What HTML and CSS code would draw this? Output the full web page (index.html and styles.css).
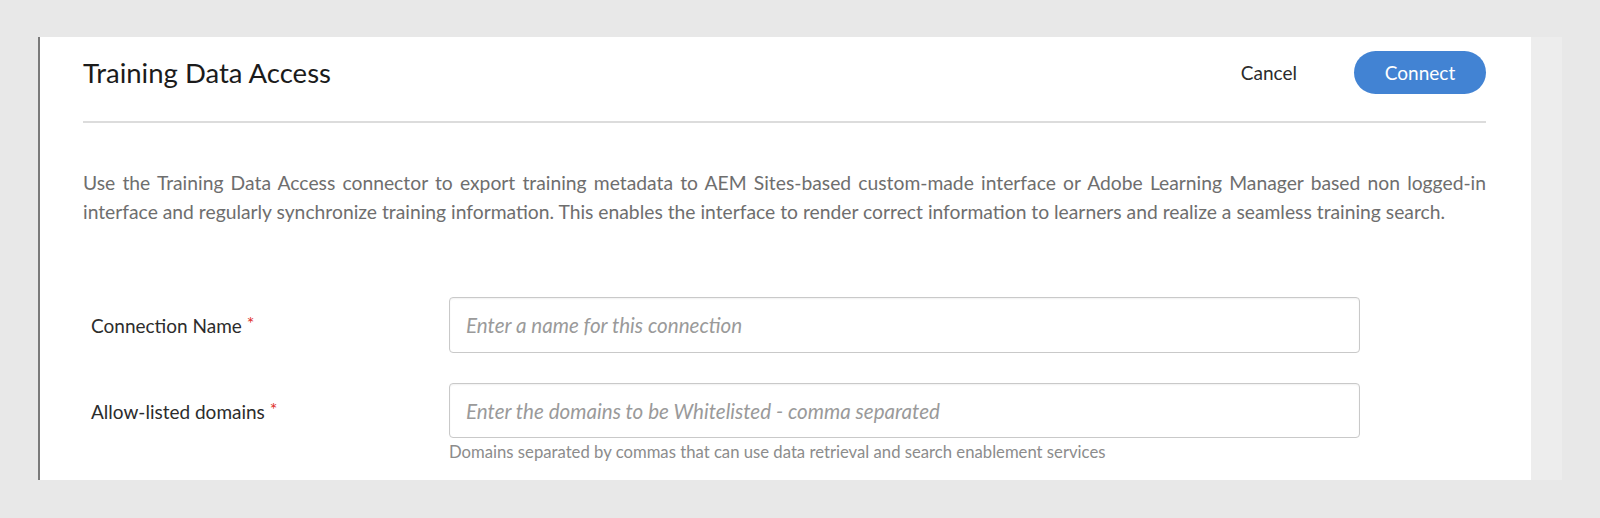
FILE: index.html
```html
<!DOCTYPE html>
<html lang="en">
<head>
<meta charset="utf-8">
<title>Training Data Access</title>
<link rel="stylesheet" href="styles.css">
</head>
<body>
<div class="frame">
  <div class="panel">
    <header class="head">
      <h1 class="title">Training Data Access</h1>
      <div class="actions">
        <button class="btn-cancel" type="button">Cancel</button>
        <button class="btn-connect" type="button">Connect</button>
      </div>
    </header>
    <p class="desc">Use the Training Data Access connector to export training metadata to AEM Sites-based custom-made interface or Adobe Learning Manager based non logged-in interface and regularly synchronize training information. This enables the interface to render correct information to learners and realize a seamless training search.</p>
    <div class="form">
      <div class="row">
        <label class="label">Connection Name <span class="req">*</span></label>
        <div class="field">
          <input class="input" type="text" placeholder="Enter a name for this connection">
        </div>
      </div>
      <div class="row">
        <label class="label">Allow-listed domains <span class="req">*</span></label>
        <div class="field">
          <input class="input" type="text" placeholder="Enter the domains to be Whitelisted - comma separated">
          <div class="help">Domains separated by commas that can use data retrieval and search enablement services</div>
        </div>
      </div>
    </div>
  </div>
</div>
</body>
</html>
```
FILE: styles.css
```css
* { box-sizing: border-box; }
html, body { margin: 0; padding: 0; }
body {
  background: #e8e8e8;
  font-family: "Lato", "Liberation Sans", sans-serif;
  height: 518px;
  overflow: hidden;
}
.frame {
  margin: 37px 0 0 38px;
  width: 1524px;
  height: 443px;
  background: #ededed;
  overflow: hidden;
}
.panel {
  width: 1493px;
  height: 443px;
  background: #fff;
  border-left: 2px solid #7a7a7a;
  padding: 14px 45px 0 43px;
}
.head {
  display: flex;
  align-items: center;
  justify-content: space-between;
  height: 43px;
}
.title {
  margin: 0;
  font-size: 27.5px;
  font-weight: 400;
  color: #1b1b1b;
}
.actions {
  display: flex;
  align-items: center;
  gap: 57px;
}
.btn-cancel {
  border: 0;
  background: none;
  font: inherit;
  font-size: 19px;
  color: #2b2b2b;
  padding: 0;
}
.btn-connect {
  border: 0;
  font: inherit;
  font-size: 19px;
  color: #fff;
  background: #4283d3;
  width: 132px;
  height: 43px;
  border-radius: 22px;
  padding: 0;
}
.desc {
  margin: 27px 0 0;
  padding-top: 45px;
  border-top: 2px solid #dcdcdc;
  font-size: 19.3px;
  line-height: 29px;
  color: #6e6e6e;
  text-align: justify;
}
.form {
  margin-top: 71px;
  display: flex;
  flex-direction: column;
  gap: 30px;
}
.row {
  display: flex;
  align-items: flex-start;
}
.label {
  width: 366px;
  padding-left: 8px;
  height: 56px;
  display: flex;
  align-items: center;
  gap: 5px;
  font-size: 19px;
  color: #2c2c2c;
}
.req { color: #e0302c; font-size: 18px; margin-top: -4px; }
.field { width: 911px; }
.input {
  display: block;
  width: 100%;
  height: 56px;
  border: 1px solid #c9c9c9;
  border-radius: 4px;
  box-shadow: inset 0 1px 2px rgba(0,0,0,0.06);
  padding: 0 16px;
  font: inherit;
  font-size: 20.6px;
  color: #333;
  outline: none;
}
.row:nth-child(2) .input { height: 55px; }
.input::placeholder { color: #9a9a9a; font-style: italic; }
.help {
  margin-top: 4px;
  font-size: 16.7px;
  line-height: 20px;
  color: #8c8c8c;
}
```
